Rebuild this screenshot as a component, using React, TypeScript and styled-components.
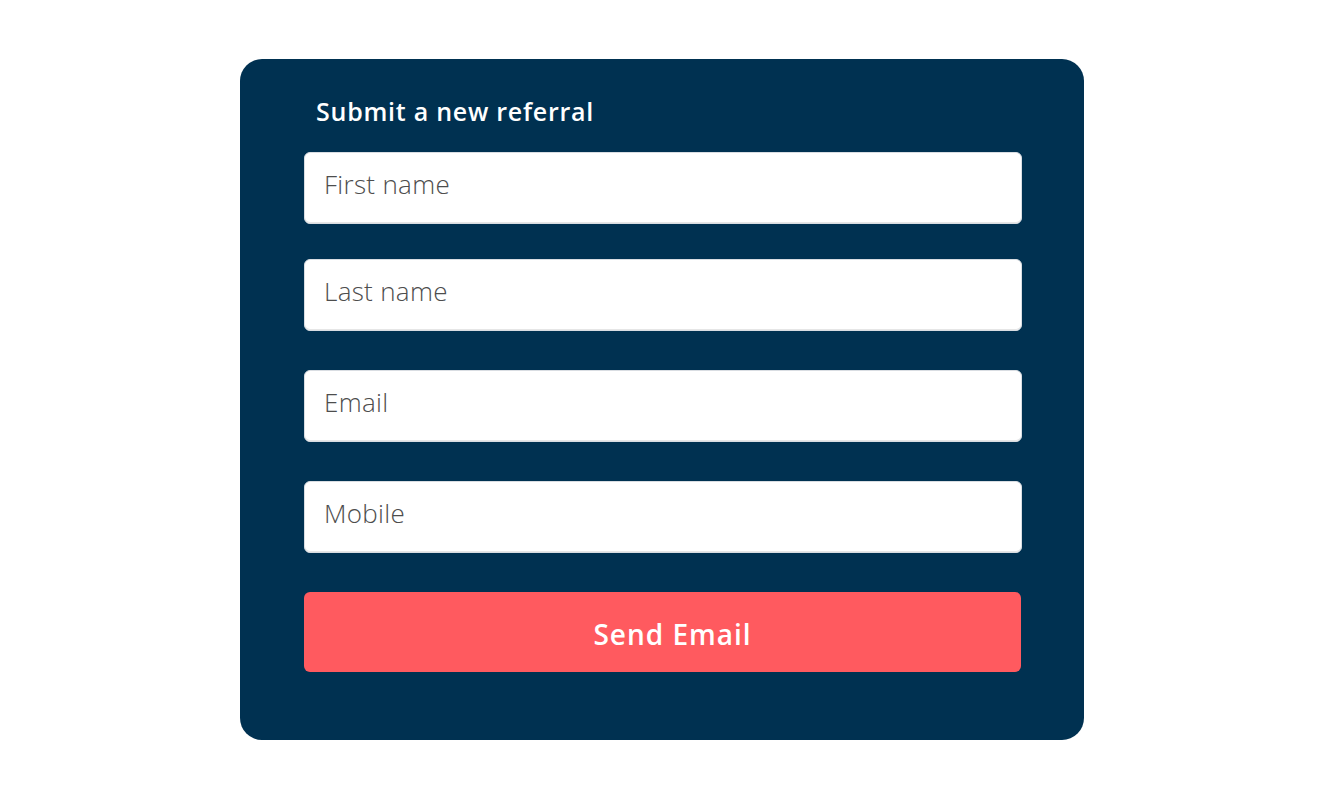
import React from "react";
import styled, { createGlobalStyle } from "styled-components";

const Global = createGlobalStyle`
  html, body { margin: 0; padding: 0; background: #ffffff; }
  body { font-family: "Open Sans", "Noto Sans", sans-serif; }
`;

const Page = styled.div`
  width: 1324px;
  height: 800px;
  padding-top: 59px;
  padding-left: 240px;
  box-sizing: border-box;
`;

const Card = styled.form`
  width: 844px;
  height: 681px;
  box-sizing: border-box;
  background: #003151;
  border-radius: 22px;
  padding: 36px 62px 0 64px;
  display: flex;
  flex-direction: column;
`;

const Title = styled.h2`
  margin: 0 0 25px 12px;
  height: 32px;
  line-height: 32px;
  font-family: "Open Sans", sans-serif;
  font-weight: 600;
  font-size: 25px;
  color: #ffffff;
  letter-spacing: 0.75px;
`;

const Fields = styled.div`
  display: flex;
  flex-direction: column;
`;

const Field = styled.input<{ $gap: number }>`
  box-sizing: border-box;
  width: 718px;
  height: 72px;
  margin-top: ${(p) => p.$gap}px;
  border: 1px solid #d9dde2;
  border-radius: 6px;
  background: #ffffff;
  box-shadow: inset 0 -1px 0 #e6e6e6;
  padding: 0 0 8px 19px;
  font-family: "Open Sans", sans-serif;
  font-weight: 300;
  font-size: 26px;
  letter-spacing: 0.3px;
  color: #4d4d4d;
  outline: none;
  &::placeholder { color: #4d4d4d; opacity: 1; }
`;

const Button = styled.button`
  margin-top: 39px;
  width: 717px;
  height: 80px;
  border: none;
  border-radius: 6px;
  background: #ff5a5f;
  color: #ffffff;
  font-family: "Open Sans", sans-serif;
  font-weight: 600;
  font-size: 28px;
  letter-spacing: 1px;
  padding: 4px 0 0 20px;
  cursor: pointer;
`;

const fields = [
  { label: "First name", gap: 0 },
  { label: "Last name", gap: 35 },
  { label: "Email", gap: 39 },
  { label: "Mobile", gap: 39 },
];

export default function App() {
  return (
    <Page>
      <Global />
      <Card onSubmit={(e) => e.preventDefault()}>
        <Title>Submit a new referral</Title>
        <Fields>
          {fields.map((f) => (
            <Field key={f.label} $gap={f.gap} placeholder={f.label} />
          ))}
        </Fields>
        <Button type="submit">Send Email</Button>
      </Card>
    </Page>
  );
}
